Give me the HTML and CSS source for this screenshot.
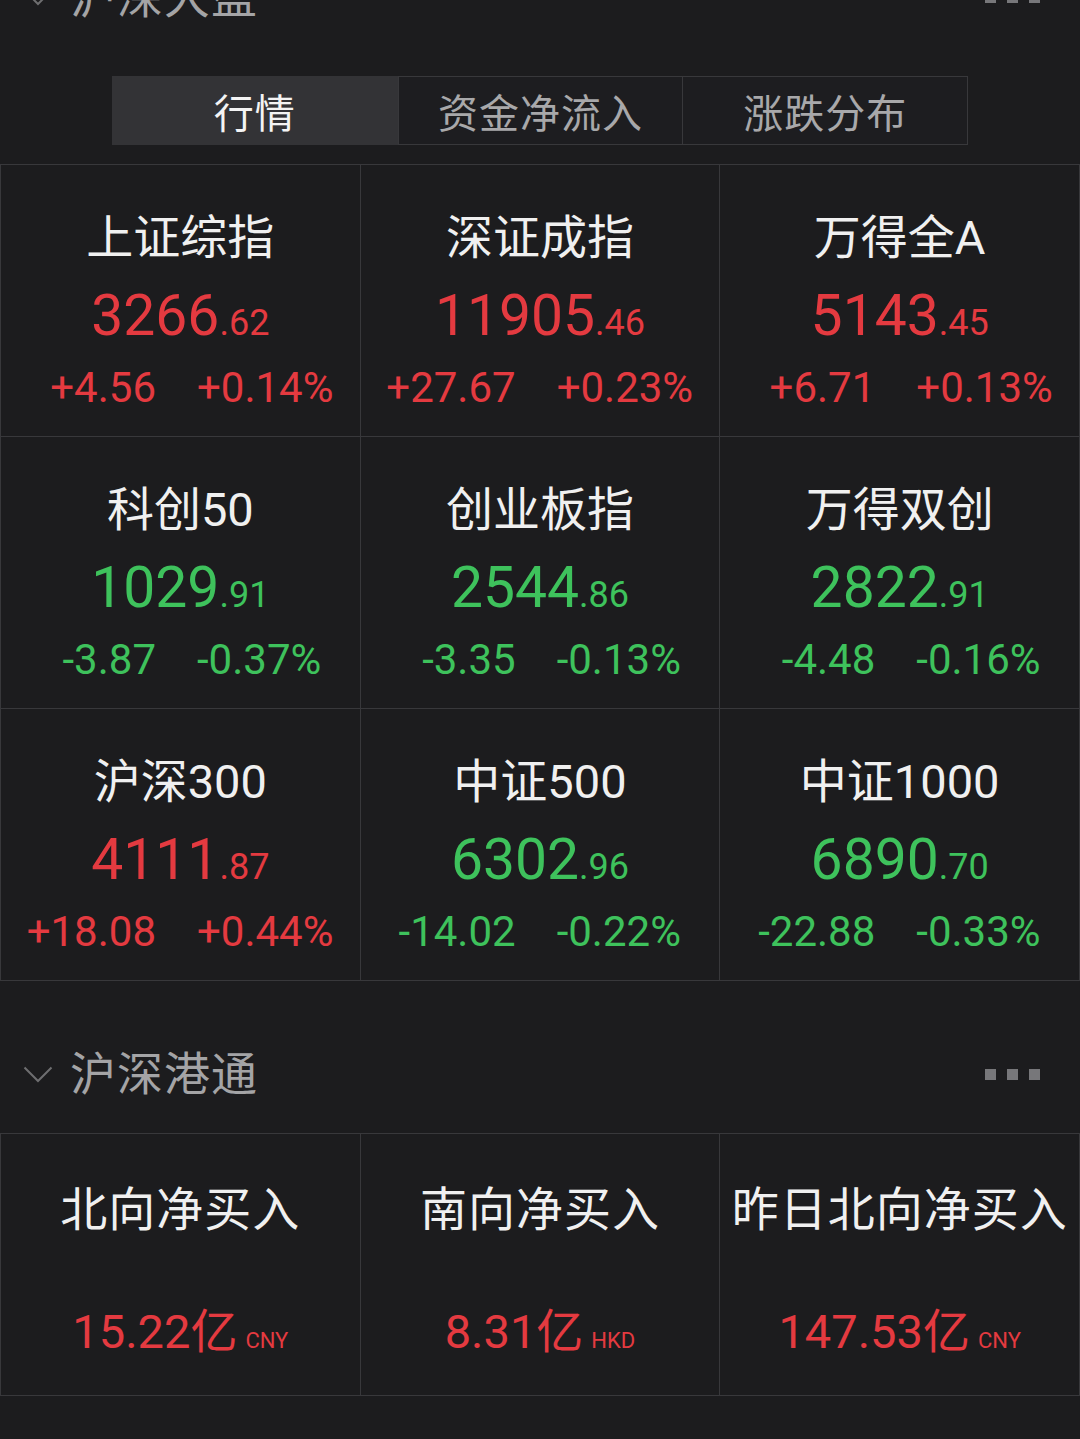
FILE: index.html
```html
<!DOCTYPE html>
<html lang="zh-CN">
<head>
<meta charset="utf-8">
<title>沪深大盘</title>
<link rel="stylesheet" href="styles.css">
</head>
<body>
<div class="page">
  <section class="sec">
    <div class="sec-head first">
      <svg class="chev" viewBox="0 0 30 17"><polyline points="1.5,1.5 15,15 28.5,1.5" fill="none" stroke="#6e6e70" stroke-width="2"/></svg>
      <div class="sec-title">沪深大盘</div>
      <div class="more"><span></span><span></span><span></span></div>
    </div>
    <div class="tabs">
      <div class="tab active">行情</div>
      <div class="tab">资金净流入</div>
      <div class="tab">涨跌分布</div>
    </div>
    <div class="grid idx">
      <div class="cell">
        <div class="name">上证综指</div>
        <div class="price up"><span>3266</span><span class="dec">.62</span></div>
        <div class="chg up"><span class="c1">+4.56</span><span class="c2">+0.14%</span></div>
      </div>
      <div class="cell">
        <div class="name">深证成指</div>
        <div class="price up"><span>11905</span><span class="dec">.46</span></div>
        <div class="chg up"><span class="c1">+27.67</span><span class="c2">+0.23%</span></div>
      </div>
      <div class="cell">
        <div class="name">万得全A</div>
        <div class="price up"><span>5143</span><span class="dec">.45</span></div>
        <div class="chg up"><span class="c1">+6.71</span><span class="c2">+0.13%</span></div>
      </div>
      <div class="cell">
        <div class="name">科创50</div>
        <div class="price down"><span>1029</span><span class="dec">.91</span></div>
        <div class="chg down"><span class="c1">-3.87</span><span class="c2">-0.37%</span></div>
      </div>
      <div class="cell">
        <div class="name">创业板指</div>
        <div class="price down"><span>2544</span><span class="dec">.86</span></div>
        <div class="chg down"><span class="c1">-3.35</span><span class="c2">-0.13%</span></div>
      </div>
      <div class="cell">
        <div class="name">万得双创</div>
        <div class="price down"><span>2822</span><span class="dec">.91</span></div>
        <div class="chg down"><span class="c1">-4.48</span><span class="c2">-0.16%</span></div>
      </div>
      <div class="cell">
        <div class="name">沪深300</div>
        <div class="price up"><span>4111</span><span class="dec">.87</span></div>
        <div class="chg up"><span class="c1">+18.08</span><span class="c2">+0.44%</span></div>
      </div>
      <div class="cell">
        <div class="name">中证500</div>
        <div class="price down"><span>6302</span><span class="dec">.96</span></div>
        <div class="chg down"><span class="c1">-14.02</span><span class="c2">-0.22%</span></div>
      </div>
      <div class="cell">
        <div class="name">中证1000</div>
        <div class="price down"><span>6890</span><span class="dec">.70</span></div>
        <div class="chg down"><span class="c1">-22.88</span><span class="c2">-0.33%</span></div>
      </div>
    </div>
  </section>

  <section class="sec">
    <div class="sec-head second">
      <svg class="chev" viewBox="0 0 30 17"><polyline points="1.5,1.5 15,15 28.5,1.5" fill="none" stroke="#6e6e70" stroke-width="2"/></svg>
      <div class="sec-title">沪深港通</div>
      <div class="more"><span></span><span></span><span></span></div>
    </div>
    <div class="grid flows">
      <div class="cell">
        <div class="name">北向净买入</div>
        <div class="flow up"><span>15.22</span><span class="yi">亿</span><span class="cur">CNY</span></div>
      </div>
      <div class="cell">
        <div class="name">南向净买入</div>
        <div class="flow up"><span>8.31</span><span class="yi">亿</span><span class="cur">HKD</span></div>
      </div>
      <div class="cell">
        <div class="name">昨日北向净买入</div>
        <div class="flow up"><span>147.53</span><span class="yi">亿</span><span class="cur">CNY</span></div>
      </div>
    </div>
  </section>
</div>
</body>
</html>
```

FILE: styles.css
```css
html, body {
  margin: 0;
  padding: 0;
  background: #1c1c1e;
  overflow: hidden;
}

body {
  font-family: Roboto, "Noto Sans CJK SC", sans-serif;
  color: #f0f0f0;
}

.page {
  width: 1080px;
}

.sec-head {
  display: flex;
  align-items: center;
  height: 70px;
  padding: 0 40px 0 23px;
}

.sec-head.first {
  margin-top: -38px;
}

.sec-head.second {
  margin-top: 58px;
}

.chev {
  width: 30px;
  height: 17px;
  margin-right: 17px;
  flex: none;
}

.sec-title {
  flex: 1;
  font-size: 46px;
  line-height: 56px;
  letter-spacing: 1px;
  color: #a4a4a6;
}

.more {
  display: flex;
  gap: 11px;
}

.more span {
  width: 11px;
  height: 11px;
  background: #77777a;
}

.tabs {
  display: flex;
  width: 856px;
  height: 69px;
  margin: 44px 0 0 112px;
}

.tab {
  flex: 1;
  display: flex;
  align-items: center;
  justify-content: center;
  font-size: 40px;
  letter-spacing: 1px;
  color: #a8a8aa;
  border: 1px solid #38383b;
  background: #1d1d20;
}

.tab + .tab + .tab {
  border-left: none;
}

.tab.active {
  background: #333336;
  border-color: #333336;
  color: #f4f4f4;
}

.grid {
  display: grid;
  grid-template-columns: repeat(3, 1fr);
  border-top: 1px solid #38383b;
  border-left: 1px solid #38383b;
}

.grid.idx {
  margin-top: 19px;
}

.grid.flows {
  margin-top: 24px;
}

.cell {
  box-sizing: border-box;
  border-right: 1px solid #38383b;
  border-bottom: 1px solid #38383b;
  display: flex;
  flex-direction: column;
  align-items: center;
  min-width: 0;
}

.idx .cell {
  height: 272px;
  padding-top: 45px;
}

.flows .cell {
  height: 262px;
  padding-top: 48px;
}

.name {
  font-size: 47px;
  line-height: 56px;
  color: #f0f0f0;
  white-space: nowrap;
}

.flows .name {
  letter-spacing: 1px;
}

.up { color: #e43a40; }
.down { color: #3ec25c; }

.price {
  margin-top: 20px;
  font-size: 57px;
  line-height: 60px;
  white-space: nowrap;
}

.price .dec {
  font-size: 36px;
}

.chg {
  align-self: stretch;
  margin-top: 10px;
  display: grid;
  grid-template-columns: 155px auto;
  column-gap: 41px;
  font-size: 42px;
  line-height: 50px;
  white-space: nowrap;
}

.chg .c1 {
  text-align: right;
}

.flow {
  margin-top: 64px;
  font-size: 47px;
  line-height: 60px;
  white-space: nowrap;
}

.flow .yi {
  font-size: 47px;
}

.flow .cur {
  font-size: 22px;
  margin-left: 8px;
}
```
